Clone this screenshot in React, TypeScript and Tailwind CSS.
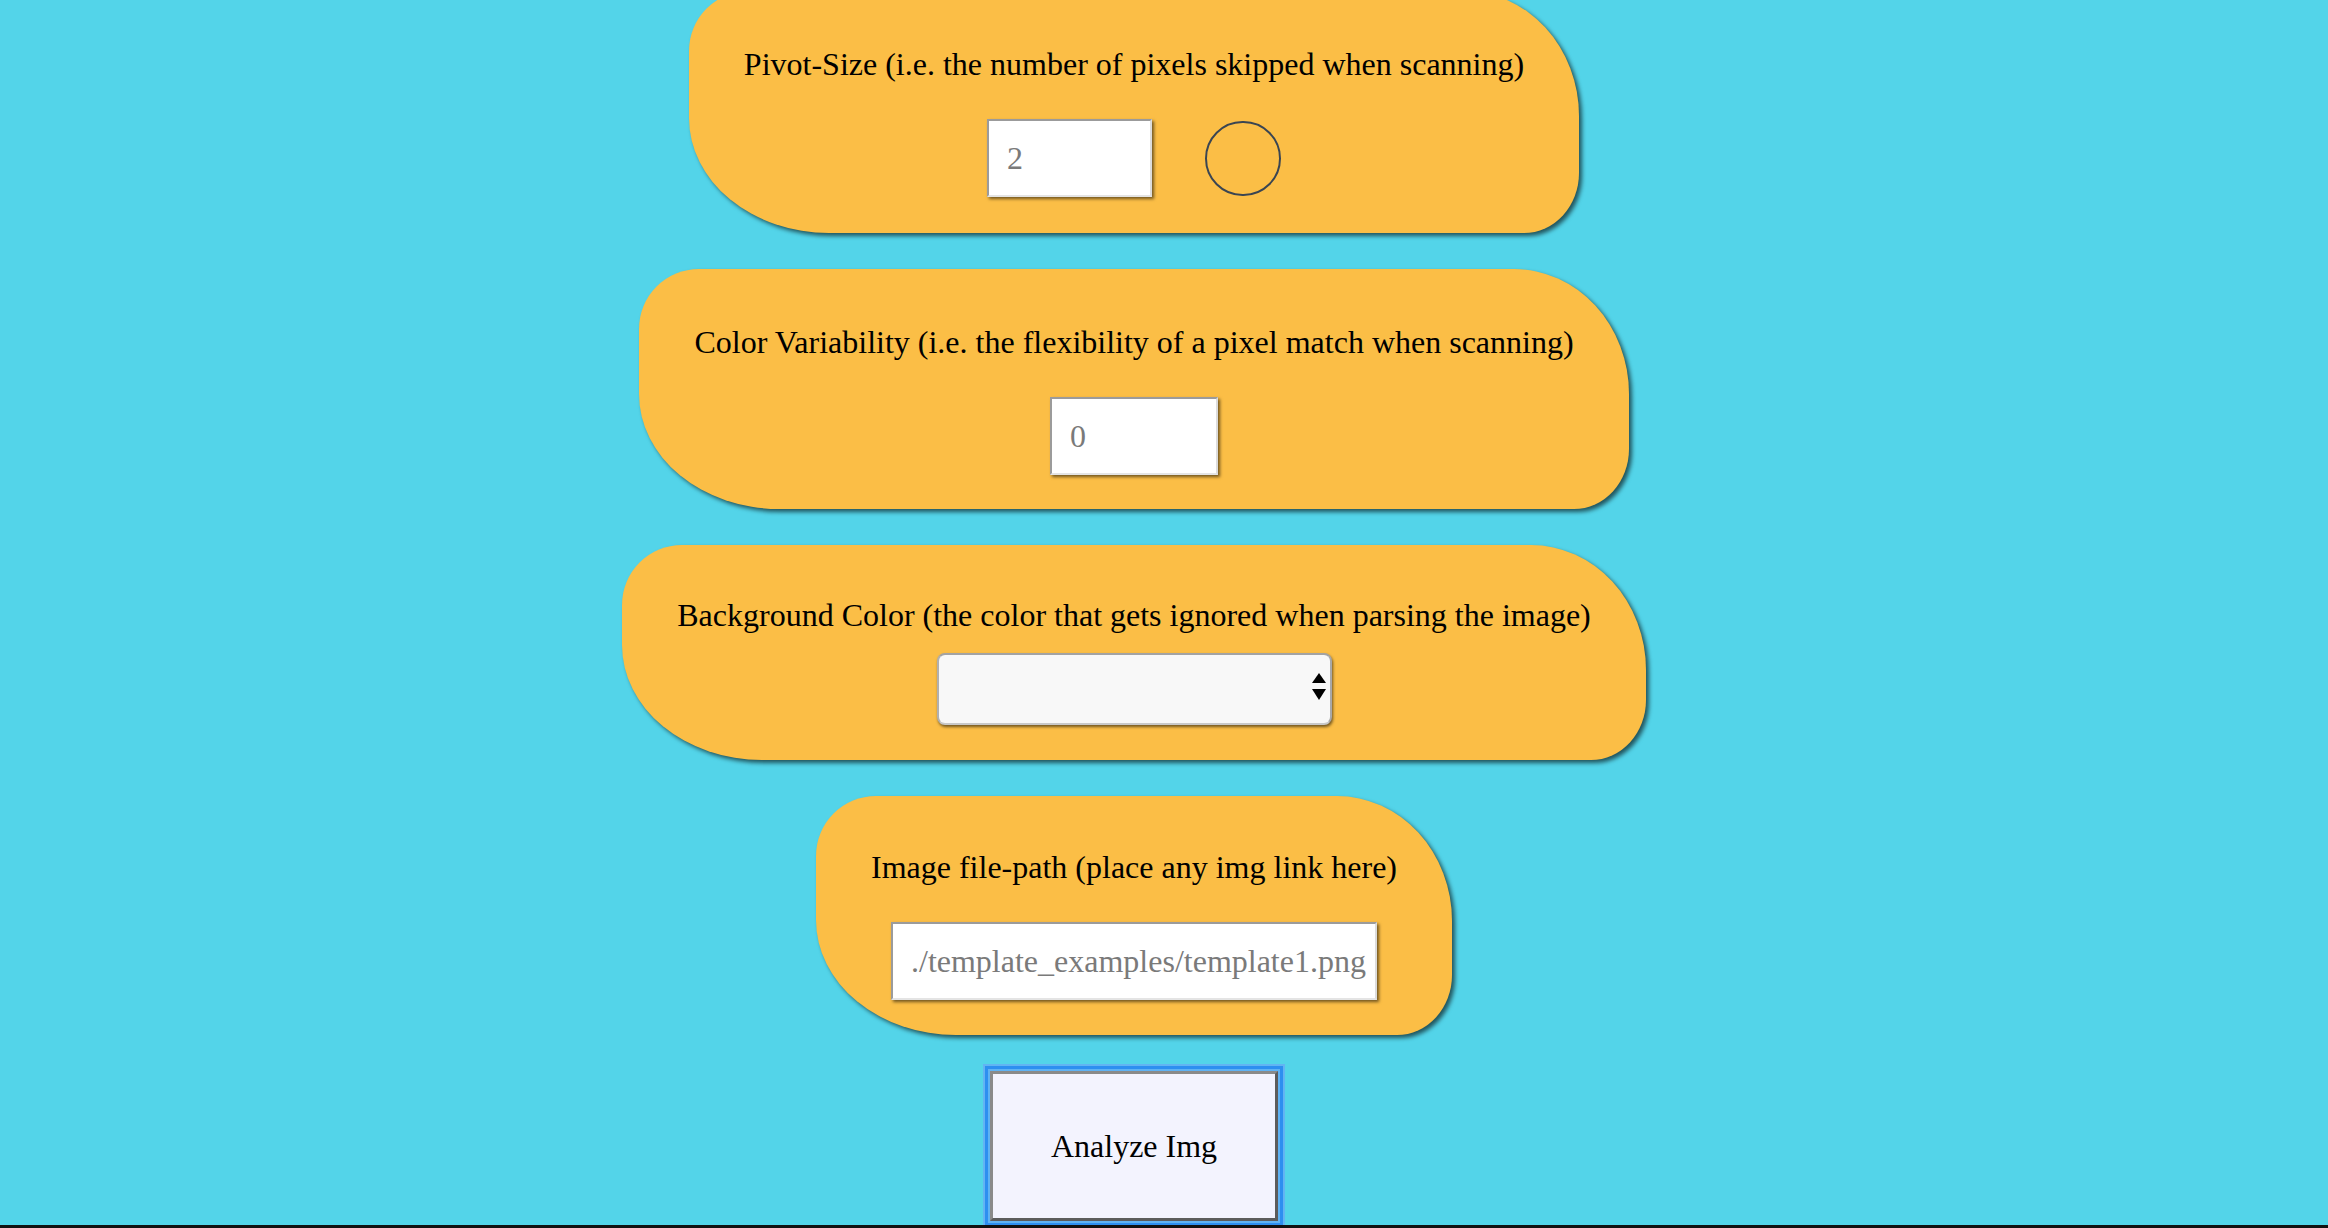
import { useState } from 'react'

const card =
    'w-fit bg-[#fbbe46] rounded-[60px_115px_55px_140px/60px_125px_60px_115px] shadow-[3px_3px_4px_rgba(0,0,0,0.6)] px-[55px] flex flex-col items-center'

const label = 'text-[32px] leading-[34px] text-black whitespace-nowrap'

const field =
    'h-[78px] bg-white border-2 border-t-[#9b9b9b] border-l-[#9b9b9b] border-r-[#dcdcdc] border-b-[#e4e4e4] shadow-[2px_2px_3px_rgba(0,0,0,0.55)] pl-[18px] text-[32px] text-black placeholder:text-[#7a7a7a] outline-none'

export default function App() {
    const [pivot, setPivot] = useState('')
    const [variability, setVariability] = useState('')
    const [bgColor, setBgColor] = useState('')
    const [path, setPath] = useState('')

    return (
        <div
            className="h-screen overflow-hidden bg-[#53d4e9] border-b-[3px] border-[#111]"
            style={{ fontFamily: '"Liberation Serif", "Times New Roman", serif' }}
        >
            <div className="w-[2268px] flex flex-col items-center gap-[36px] -mt-[9px]">
                {/* Pivot size */}
                <div className={`${card} pt-[56px] pb-[36px]`}>
                    <p className={label}>Pivot-Size (i.e. the number of pixels skipped when scanning)</p>
                    <div className="flex items-center gap-[53px] mt-[38px]">
                        <input
                            value={pivot}
                            onChange={(e) => setPivot(e.target.value)}
                            placeholder="2"
                            className={`${field} w-[165px]`}
                        />
                        <span className="w-[76px] h-[75px] rounded-full border-2 border-[#3a4552]" />
                    </div>
                </div>

                {/* Color variability */}
                <div className={`${card} pt-[56px] pb-[34px]`}>
                    <p className={label}>Color Variability (i.e. the flexibility of a pixel match when scanning)</p>
                    <input
                        value={variability}
                        onChange={(e) => setVariability(e.target.value)}
                        placeholder="0"
                        className={`${field} w-[168px] mt-[38px]`}
                    />
                </div>

                {/* Background color */}
                <div className={`${card} pt-[53px] pb-[35px]`}>
                    <p className={label}>Background Color (the color that gets ignored when parsing the image)</p>
                    <div className="relative mt-[21px]">
                        <select
                            value={bgColor}
                            onChange={(e) => setBgColor(e.target.value)}
                            className="appearance-none w-[395px] h-[72px] bg-[#f8f8f8] rounded-[8px] border-2 border-t-[#a3a3a3] border-l-[#b0b0b0] border-r-[#a8a8a8] border-b-[#c8c8c8] shadow-[1px_2px_3px_rgba(0,0,0,0.55)] outline-none"
                        >
                            <option value=""></option>
                        </select>
                        <svg
                            className="absolute right-[6px] top-[19px] pointer-events-none"
                            width="14"
                            height="30"
                            viewBox="0 0 14 30"
                        >
                            <path d="M7 1 L14 11 L0 11 Z" fill="#000" />
                            <path d="M0 17 L14 17 L7 28 Z" fill="#000" />
                        </svg>
                    </div>
                </div>

                {/* Image path */}
                <div className={`${card} pt-[54px] pb-[35px]`}>
                    <p className={label}>Image file-path (place any img link here)</p>
                    <input
                        value={path}
                        onChange={(e) => setPath(e.target.value)}
                        placeholder="./template_examples/template1.png"
                        className={`${field} w-[486px] mt-[38px]`}
                    />
                </div>

                <button
                    className="w-[288px] h-[150px] bg-[#f3f3fe] border-[3px] border-[#8a8a8a] border-r-[#5c5c5c] border-b-[#5c5c5c] shadow-[0_0_0_2px_#5fb2f3,0_0_0_5px_#2d8ff0,0_0_0_7px_#62b4f3] text-[32px] text-black outline-none"
                >
                    Analyze Img
                </button>
            </div>
        </div>
    )
}
